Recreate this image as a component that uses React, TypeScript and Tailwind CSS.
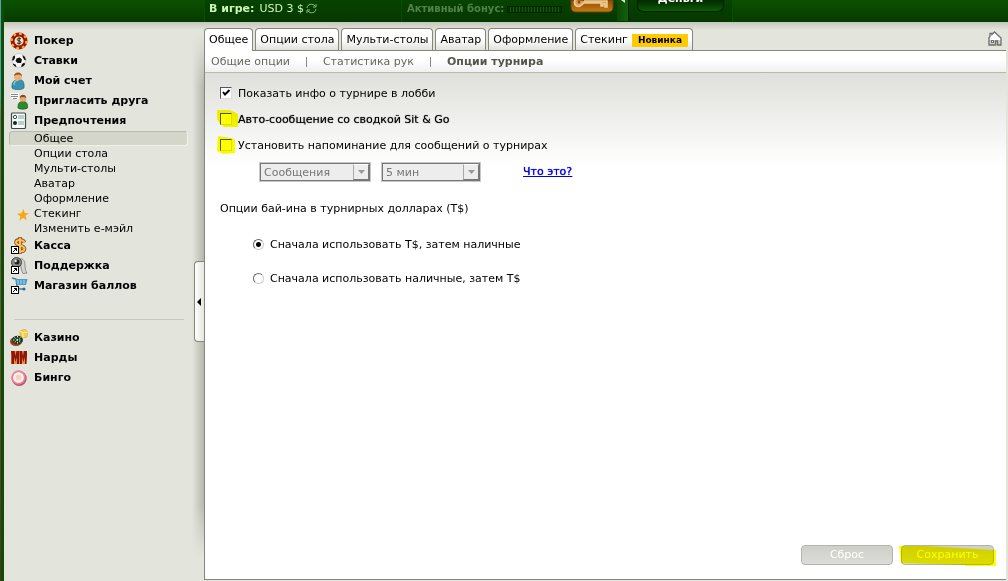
import { ReactNode } from "react";

interface MenuItemProps {
    label: string
    icon: ReactNode
}

interface TabProps {
    label: string
    active?: boolean
    badge?: string
}

interface CheckRowProps {
    id: string
    label: string
    checked?: boolean
    strong?: boolean
    marker?: string
}

interface RadioRowProps {
    id: string
    label: string
    checked?: boolean
}

interface SelectBoxProps {
    label: string
    value: string
    narrow?: boolean
}

const iconClass = "size-[18px] shrink-0";

function ShortcutMark() {
    return (
        <>
            <rect x="1.5" y="9.5" width="7" height="7" fill="#fff" stroke="#000" />
            <path d="M3 15L6.500 11.500M4 11.500h2.500v2.500" stroke="#000" fill="none" />
        </>
    );
}

function PokerIcon() {
    return (
        <svg viewBox="0 0 18 18" className={iconClass}>
            <circle cx="9" cy="9" r="8.500" fill="#a81508" />
            <circle cx="9" cy="9" r="7.300" fill="none" stroke="#f7b52c" strokeWidth="2" strokeDasharray="2.700 3" />
            <circle cx="9" cy="9" r="5.200" fill="#f6dfbd" stroke="#7c0d05" strokeWidth="1.200" />
            <path d="M11 7C10 6 7.300 6.100 7.300 7.700c0 1.600 3.700 1 3.700 2.700 0 1.600-3 1.600-4 .5M9.100 5.200v7.500" stroke="#3c1b10" fill="none" />
        </svg>
    );
}

function BallIcon() {
    return (
        <svg viewBox="0 0 18 18" className={iconClass}>
            <circle cx="9" cy="8.500" r="7" fill="#f4f4f4" stroke="#bbb" strokeWidth=".6" />
            <path d="M6.500 6.500l3-1 2.500 2-1 3.500H7.500L5.500 9zM2 8.500L3 4.500 5 3.500 5 6 3.500 8.500zM12.500 3l2.500 2 1 3.500-1.500-.5-1.500-2.500zM3 11.500l2.500 1 1 2.500-1.500-.5-2-2zM14.500 10.500l-2.500 1.500-1 3 2-.5 2-2z" fill="#111" />
        </svg>
    );
}

function AccountIcon() {
    return (
        <svg viewBox="0 0 18 18" className={iconClass}>
            <path d="M2 16c-.5-6 2-8.500 6.500-8.500S14.500 10 14 16c-2.500 2.200-9.500 2.200-12 0z" fill="#3b93ac" stroke="#28677c" strokeWidth=".7" />
            <path d="M4 13c0-3 1.500-4.500 4-4.700" stroke="#80c8d8" strokeWidth="1.500" fill="none" />
            <circle cx="8" cy="4.500" r="4" fill="#eeb17c" />
            <path d="M4 4C4.200-.8 11.800-.8 12 4c-2-1.500-5-2-8 0z" fill="#95582a" />
        </svg>
    );
}

function InviteIcon() {
    return (
        <svg viewBox="0 0 18 18" className={iconClass}>
            <path d="M0 1h9v6H7l1.500 2L5 7H2z" fill="#fff" />
            <path d="M1 2.500h7M1 4.500h7M3 6.500h4" stroke="#666" strokeWidth=".8" />
            <path d="M8 16c-.3-4.500 1.500-6.500 5-6.500s4.800 2 4.500 6.500c-2 1.600-7.500 1.600-9.500 0z" fill="#2c8b2d" stroke="#155917" strokeWidth=".7" />
            <circle cx="13" cy="6.500" r="3.200" fill="#e9a76f" />
            <path d="M9.700 6c0-4.500 6.500-4.500 6.600 0-2-1.500-4.500-1.500-6.600 0z" fill="#8d4820" />
        </svg>
    );
}

function PreferencesIcon() {
    return (
        <svg viewBox="0 0 18 18" className={iconClass}>
            <rect x="1.500" y="1" width="14" height="15.500" rx="1" fill="#f7faf8" stroke="#3d484b" strokeWidth="1.200" />
            <circle cx="5" cy="5" r="1.700" fill="#fff" stroke="#33535a" />
            <circle cx="5" cy="11" r="2" fill="#102a20" />
            <path d="M8 4h6M8 6h6M8 10h6M8 12h6" stroke="#79a8a5" />
        </svg>
    );
}

function StarIcon() {
    return (
        <svg viewBox="0 0 12 12" className="size-3">
            <path d="M6.500 0l1.200 4 4.100.2-3.300 2.600 1.200 4.400-3.700-2.400L2.500 12l.9-4.500L0 4.700l4.400-.5z" fill="#f7a815" />
        </svg>
    );
}

function CashierIcon() {
    return (
        <svg viewBox="0 0 18 18" className={iconClass}>
            <path d="M14.500 5.500C13 2 6 2 6 5.500c0 3.500 8.500 2.500 8.500 6.200 0 3.600-7 3.500-9.500 1M10 0v17" stroke="#8c4d12" strokeWidth="3.600" fill="none" />
            <path d="M14.500 5.500C13 2 6 2 6 5.500c0 3.500 8.500 2.500 8.500 6.200 0 3.600-7 3.500-9.500 1M10 .8v15.500" stroke="#f6c25c" strokeWidth="2" fill="none" />
            <ShortcutMark />
        </svg>
    );
}

function SupportIcon() {
    return (
        <svg viewBox="0 0 18 18" className={iconClass}>
            <path d="M9 1.500c5 0 6 3 6 7 0 3 .5 5 2 7.500l-4 .5C10.500 13 12 7 8 5z" fill="#d4d4d4" stroke="#777" strokeWidth=".8" />
            <circle cx="6.500" cy="5.500" r="5" fill="#8a8a8a" stroke="#444" />
            <circle cx="7" cy="5" r="2.500" fill="#222" />
            <circle cx="5.700" cy="4" r="1.200" fill="#e5e5e5" />
            <ShortcutMark />
        </svg>
    );
}

function ShopIcon() {
    return (
        <svg viewBox="0 0 18 18" className={iconClass}>
            <path d="M2 1l4 1 1.500 10H15" stroke="#417ca9" strokeWidth="1.500" fill="none" />
            <path d="M5.500 2h12l-1.500 6H7z" fill="#4f9ac8" />
            <path d="M7 4h9M7 6h9" stroke="#b3dcf0" strokeDasharray="2 1" />
            <circle cx="14" cy="12" r="1.500" fill="#33658e" />
            <ShortcutMark />
        </svg>
    );
}

function CasinoIcon() {
    return (
        <svg viewBox="0 0 18 18" className={iconClass}>
            <path d="M10 2l5-2 3 3-1 5-4 1-3-2z" fill="#f6cc50" stroke="#dda52b" strokeWidth=".6" />
            <path d="M10 2l3 2 5-1M13 4v5" stroke="#fff0a5" fill="none" />
            <ellipse cx="6" cy="12.500" rx="6" ry="4.500" fill="#a23a1d" />
            <ellipse cx="7.500" cy="11" rx="5.500" ry="4.300" fill="#163e24" />
            <path d="M3 11h9M7.500 7v8M4.500 8.500l6 5M10.500 8.500l-6 5" stroke="#e7dfc0" strokeDasharray="1.500 1.500" />
        </svg>
    );
}

function BackgammonIcon() {
    return (
        <svg viewBox="0 0 18 18" className={iconClass}>
            <path d="M1 2h16v3l-1 1v9h-3l-.5-1-.5 1H1V6z" fill="#e98a3a" />
            <path d="M1 2h3.500l1 5 1-5H9v13H7V8l-1.500 5L4 8v7H1.500V6zM9.500 2H12l1 5 1-5h3v4l-.500 9H15V8l-1.500 5L12 8v7h-2z" fill="#8e1609" />
        </svg>
    );
}

function BingoIcon() {
    return (
        <svg viewBox="0 0 18 18" className={iconClass}>
            <circle cx="9.200" cy="9.500" r="7.500" fill="#b94f65" />
            <circle cx="8.500" cy="8.500" r="7.200" fill="#f07f95" />
            <circle cx="8.500" cy="8.500" r="4.700" fill="#fbe9df" stroke="#fff" strokeWidth="1.200" />
            <circle cx="8.500" cy="8.500" r="2.800" fill="#f6d3b8" />
        </svg>
    );
}

function HomeIcon() {
    return (
        <svg viewBox="0 0 14 15" className="h-[15px] w-[14px]">
            <path d="M1 14V6.500l1-1V2h2v1.500L6.500 1 13 7v7z" fill="#fff" />
            <path d="M1 9h12v5H1z" fill="#cfd0cb" />
            <path d="M1 14V6.500l1-1V2.500h2v1L6.500 1 13 7v7H9.500v-4h-2v4z" stroke="#6d6f6b" strokeWidth="1.300" fill="none" />
            <rect x="3.500" y="9.500" width="2" height="2" fill="#fff" stroke="#6d6f6b" />
        </svg>
    );
}

function KeyIcon() {
    return (
        <svg viewBox="0 0 44 13" className="ml-[5px] h-[13px] w-11 shrink-0">
            <defs>
                <linearGradient id="key" x1="0" y1="0" x2="0" y2="1">
                    <stop offset="0" stopColor="#8f4b08" />
                    <stop offset="1" stopColor="#c67d14" />
                </linearGradient>
            </defs>
            <path d="M1 0h42v7q0 5-5 5H6q-5 0-5-5z" fill="url(#key)" stroke="#6f4208" />
            <path d="M5 0c-2 5 2 8 6 5.500L14 3h17v3h2V4h2v3h2V1H14" stroke="#f1cf96" strokeWidth="1.500" fill="#d9a75f" />
            <circle cx="9" cy="2" r="1.500" fill="#8f4b08" />
        </svg>
    );
}

function MenuItem({ label, icon }: MenuItemProps) {
    return (
        <a href="#" className="flex h-5 items-center gap-[6px] pl-[6px] text-[11px] font-bold">
            {icon}
            {label}
        </a>
    );
}

function Tab({ label, active, badge }: TabProps) {
    return (
        <button
            type="button"
            className={
                active
                    ? "-mb-px flex h-[23px] items-center rounded-t border border-b-0 border-[#85877c] bg-white px-1"
                    : "flex h-[22px] items-center rounded-t border border-b-0 border-[#85877c] bg-linear-to-b from-white from-50% to-[#e0e1da] px-1 pt-px"
            }
        >
            {label}
            {badge && <span className="ml-1 bg-[#ffcb00] px-[6px] text-[9px] leading-[13px] font-bold">{badge}</span>}
        </button>
    );
}

function CheckRow({ id, label, checked, strong, marker }: CheckRowProps) {
    return (
        <div className="relative flex h-[26px] items-center gap-[6px]">
            <input
                id={id}
                type="checkbox"
                defaultChecked={checked}
                className="peer size-3 shrink-0 appearance-none border border-t-[#555] border-r-[#ddd] border-b-[#ddd] border-l-[#555] bg-white"
            />
            <svg viewBox="0 0 12 12" className="pointer-events-none absolute left-0 hidden size-3 peer-checked:block">
                <path d="M3 5l2 2.500 4.500-4.500" stroke="#000" strokeWidth="2" fill="none" />
            </svg>
            <label htmlFor={id} className={strong ? "pt-[2px] [text-shadow:0_0_1px_#555]" : "pt-[2px]"}>{label}</label>
            {marker && (
                <svg viewBox="0 0 22 22" className="pointer-events-none absolute -left-[3px] size-[22px] mix-blend-multiply">
                    <path d={marker} fill="#ff0" />
                </svg>
            )}
        </div>
    );
}

function RadioRow({ id, label, checked }: RadioRowProps) {
    return (
        <div className="flex h-4 items-center gap-[6px]">
            <input
                id={id}
                type="radio"
                name="buyin"
                defaultChecked={checked}
                className="size-[11px] appearance-none rounded-full border border-t-[#666] border-r-[#ccc] border-b-[#ccc] border-l-[#666] bg-white checked:bg-[radial-gradient(circle,#000_2px,#fff_3px)]"
            />
            <label htmlFor={id} className="pt-[2px]">{label}</label>
        </div>
    );
}

function SelectBox({ label, value, narrow }: SelectBoxProps) {
    return (
        <div className={narrow ? "relative w-[100px] border border-[#c8c8c8]" : "relative w-[112px] border border-[#c8c8c8]"}>
            <select
                aria-label={label}
                disabled
                className="block h-[18px] w-full appearance-none border border-[#777] bg-[#ededed] pt-px pl-[3px] text-[#777]"
            >
                <option>{value}</option>
            </select>
            <span className="pointer-events-none absolute top-px right-px flex h-4 w-4 items-center justify-center border border-t-white border-r-[#777] border-b-[#777] border-l-[#aaa] bg-[#ededed]">
                <svg viewBox="0 0 7 4" className="h-1 w-[7px]">
                    <path d="M0 0h7L3.500 4z" fill="#999" />
                </svg>
            </span>
        </div>
    );
}

const subItems = ["Общее", "Опции стола", "Мульти-столы", "Аватар", "Оформление", "Стекинг", "Изменить е-мэйл"];

function Header() {
    return (
        <header className="flex h-[22px] overflow-hidden bg-linear-to-b from-[#0b5000] to-[#073b00] text-[11px]">
            <div className="w-[200px] shrink-0" />
            <div className="flex w-[529px] shrink-0 border-x border-[#075000] bg-linear-to-b from-[#064300] to-[#053700]">
                <div className="flex w-[197px] shrink-0 gap-[5px] border-r border-[#0a4a04] pl-1 leading-[17px] text-[#cdf5b5]">
                    <span className="font-bold">В игре:</span>
                    <span>USD 3 $</span>
                    <svg viewBox="0 0 11 11" className="mt-[3px] -ml-[3px] size-[11px]">
                        <path d="M1 5C1 1 7 0 9 3M10 1v3H7M10 6c0 4-6 5-8 2M1 10V7h3" stroke="#8cba80" fill="none" />
                    </svg>
                </div>
                <div className="flex w-[215px] shrink-0 gap-[3px] pl-[5px] leading-[17px] text-[#528048]">
                    <span className="text-[10px] font-bold whitespace-nowrap">Активный бонус:</span>
                    <span className="mt-[6px] h-[7px] w-[55px] shrink-0 border border-[#021f00] bg-[repeating-linear-gradient(90deg,#053500_0_2px,#1c5613_2px_3px)]" />
                    <KeyIcon />
                </div>
                <div className="flex h-[21px] w-3 shrink-0 justify-center border-r border-[#021f00] bg-linear-to-r from-[#0a4a04] to-[#126010]">
                    <svg viewBox="0 0 4 4" className="size-1">
                        <path d="M0 0h4v3z" fill="#d5e6d0" />
                    </svg>
                </div>
                <button type="button" className="ml-2 h-3 w-[87px] shrink-0 rounded-b-md border border-t-0 border-[#021a00] bg-linear-to-b from-[#032800] to-[#0c5c04] font-bold text-white">
                    <span className="-mt-[13px] block leading-[14px]">Деньги</span>
                </button>
            </div>
        </header>
    );
}

function Sidebar() {
    return (
        <nav className="relative flex w-[200px] shrink-0 flex-col pt-[9px]">
            <div className="absolute top-3 right-0 bottom-6 w-3 bg-linear-to-r from-transparent to-[#b5b7ad] mask-y-from-90%" />
            <MenuItem label="Покер" icon={<PokerIcon />} />
            <MenuItem label="Ставки" icon={<BallIcon />} />
            <MenuItem label="Мой счет" icon={<AccountIcon />} />
            <MenuItem label="Пригласить друга" icon={<InviteIcon />} />
            <MenuItem label="Предпочтения" icon={<PreferencesIcon />} />
            <ul className="pr-4 pl-[5px]">
                {subItems.map((item, i) => (
                    <li key={item}>
                        <a
                            href="#"
                            className={
                                i === 0
                                    ? "flex h-[15px] items-center rounded-sm border border-t-[#b8baae] border-r-[#f0f0e8] border-b-[#f0f0e8] border-l-[#b8baae] bg-[#d4d6ca] pt-[2px] pl-6"
                                    : "relative flex h-[15px] items-center pt-[2px] pl-[25px]"
                            }
                        >
                            {item === "Стекинг" && <span className="absolute left-2"><StarIcon /></span>}
                            {item}
                        </a>
                    </li>
                ))}
            </ul>
            <MenuItem label="Касса" icon={<CashierIcon />} />
            <MenuItem label="Поддержка" icon={<SupportIcon />} />
            <MenuItem label="Магазин баллов" icon={<ShopIcon />} />
            <hr className="mt-[23px] mr-5 mb-2 ml-[10px] border-[#c6c8be]" />
            <MenuItem label="Казино" icon={<CasinoIcon />} />
            <MenuItem label="Нарды" icon={<BackgammonIcon />} />
            <MenuItem label="Бинго" icon={<BingoIcon />} />
            <button
                type="button"
                aria-label="Свернуть"
                className="absolute top-[239px] right-0 flex h-[81px] w-[10px] items-center justify-end rounded-l border border-r-0 border-[#85877c] bg-linear-to-r from-white to-[#e4e5de] pr-[3px]"
            >
                <svg viewBox="0 0 4 8" className="h-2 w-1">
                    <path d="M4 0v8L0 4z" fill="#000" />
                </svg>
            </button>
        </nav>
    );
}

export default function App() {
    return (
        <div className="flex min-h-screen bg-[#e3e5dc] font-['DejaVu_Sans',sans-serif] text-[11px] text-black">
            <div className="w-px shrink-0 bg-linear-to-b from-[#5c9fb5] from-15% via-[#8a6a6e] via-20% to-[#5a2a24]" />
            <div className="w-[3px] shrink-0 bg-[#0a5000]" />
            <div className="flex min-w-0 flex-1 flex-col">
                <Header />
                <div className="flex flex-1 bg-linear-to-b from-[#c4c6bc] to-transparent to-[8px]">
                    <Sidebar />
                    <div className="flex min-w-0 flex-1 flex-col pt-[6px] pr-[2px] pb-px">
                        <div className="flex items-end justify-between border-b border-[#85877c]">
                            <div className="flex items-end gap-[2px]">
                                <Tab label="Общее" active />
                                <Tab label="Опции стола" />
                                <Tab label="Мульти-столы" />
                                <Tab label="Аватар" />
                                <Tab label="Оформление" />
                                <Tab label="Стекинг" badge="Новинка" />
                            </div>
                            <a href="#" aria-label="Домой" className="mr-1 mb-1"><HomeIcon /></a>
                        </div>
                        <main className="flex flex-1 flex-col border-b border-l border-[#85877c] bg-white">
                            <div className="flex h-[22px] items-center gap-4 border-b border-[#b9bba8] bg-linear-to-b from-white from-40% to-[#f0f0f0] pt-px pl-[6px] text-[#66675f]">
                                <a href="#">Общие опции</a>
                                <span className="h-[10px] w-px bg-[#888]" />
                                <a href="#">Статистика рук</a>
                                <span className="h-[10px] w-px bg-[#888]" />
                                <a href="#" className="font-bold text-[#55564b]">Опции турнира</a>
                            </div>
                            <form className="flex flex-1 flex-col bg-linear-to-b from-[#dfe0db] to-white to-[92px] pt-[7px] pl-[15px]">
                                <CheckRow id="info" label="Показать инфо о турнире в лобби" checked />
                                <CheckRow id="auto" label="Авто-сообщение со сводкой Sit & Go" strong marker="M0 2l13 0 8 4v13l-14 0-4-3-3-5z" />
                                <CheckRow id="remind" label="Установить напоминание для сообщений о турнирах" marker="M1 2l14 2 3 2v13l-12 1-6-3z" />
                                <div className="mt-1 flex items-center gap-[10px] pl-[39px]">
                                    <SelectBox label="Тип" value="Сообщения" />
                                    <SelectBox label="Время" value="5 мин" narrow />
                                    <a href="#" className="ml-8 pt-px text-[#0000e0] underline [text-shadow:0_0_1px_#0000e0]">Что это?</a>
                                </div>
                                <fieldset className="mt-[19px]">
                                    <legend>Опции бай-ина в турнирных долларах (T$)</legend>
                                    <div className="mt-[19px] flex flex-col gap-[18px] pl-[33px]">
                                        <RadioRow id="tfirst" label="Сначала использовать T$, затем наличные" checked />
                                        <RadioRow id="cashfirst" label="Сначала использовать наличные, затем T$" />
                                    </div>
                                </fieldset>
                                <div className="mt-auto flex justify-end gap-2 pr-3 pb-[14px] text-white">
                                    <button type="reset" className="h-5 w-[92px] rounded-sm border border-[#b4b5a9] bg-linear-to-b from-[#cfcfca] to-[#dcdcd8] pt-px">
                                        Сброс
                                    </button>
                                    <div className="relative">
                                        <button type="button" className="h-5 w-[93px] rounded-sm border border-[#b4b5a9] bg-linear-to-b from-[#cfcfca] to-[#dcdcd8] pt-px">
                                            Сохранить
                                        </button>
                                        <svg viewBox="0 0 100 22" className="pointer-events-none absolute top-0 -left-[2px] h-[22px] w-[100px] mix-blend-multiply">
                                            <path d="M0 1h28l50 3 19 1v16H66v-1l-64-2z" fill="#ff0" />
                                        </svg>
                                    </div>
                                </div>
                            </form>
                        </main>
                    </div>
                </div>
            </div>
        </div>
    );
}
